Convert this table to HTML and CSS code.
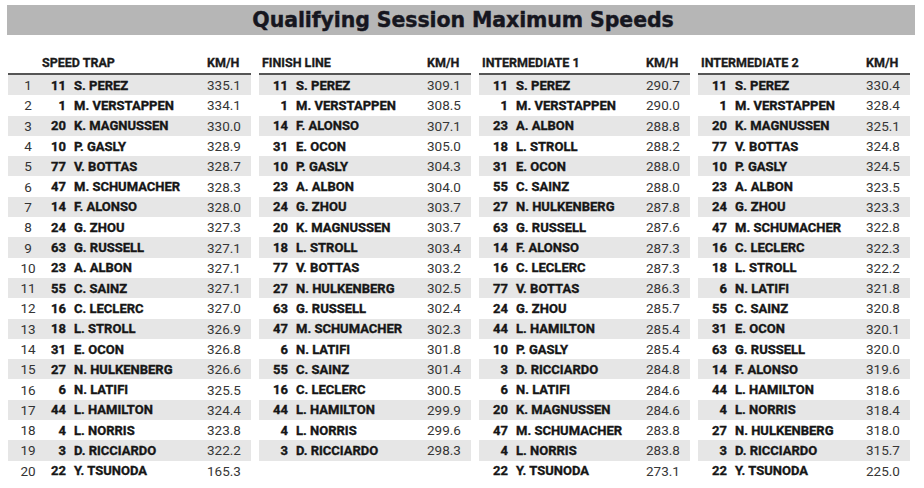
FILE: index.html
```html
<!DOCTYPE html>
<html>
<head>
<meta charset="utf-8">
<link rel="stylesheet" href="styles.css">
</head>
<body>
<div class="title-bar"><h1 class="title">Qualifying Session Maximum Speeds</h1></div>
<div class="tables">
  <div class="col col-first">
    <div class="head"><span class="h-pos"></span><span class="h-label">SPEED TRAP</span><span class="h-unit">KM/H</span></div>
    <div class="row"><span class="pos">1</span><span class="num">11</span><span class="name">S. PEREZ</span><span class="spd">335.1</span></div>
    <div class="row"><span class="pos">2</span><span class="num">1</span><span class="name">M. VERSTAPPEN</span><span class="spd">334.1</span></div>
    <div class="row"><span class="pos">3</span><span class="num">20</span><span class="name">K. MAGNUSSEN</span><span class="spd">330.0</span></div>
    <div class="row"><span class="pos">4</span><span class="num">10</span><span class="name">P. GASLY</span><span class="spd">328.9</span></div>
    <div class="row"><span class="pos">5</span><span class="num">77</span><span class="name">V. BOTTAS</span><span class="spd">328.7</span></div>
    <div class="row"><span class="pos">6</span><span class="num">47</span><span class="name">M. SCHUMACHER</span><span class="spd">328.3</span></div>
    <div class="row"><span class="pos">7</span><span class="num">14</span><span class="name">F. ALONSO</span><span class="spd">328.0</span></div>
    <div class="row"><span class="pos">8</span><span class="num">24</span><span class="name">G. ZHOU</span><span class="spd">327.3</span></div>
    <div class="row"><span class="pos">9</span><span class="num">63</span><span class="name">G. RUSSELL</span><span class="spd">327.1</span></div>
    <div class="row"><span class="pos">10</span><span class="num">23</span><span class="name">A. ALBON</span><span class="spd">327.1</span></div>
    <div class="row"><span class="pos">11</span><span class="num">55</span><span class="name">C. SAINZ</span><span class="spd">327.1</span></div>
    <div class="row"><span class="pos">12</span><span class="num">16</span><span class="name">C. LECLERC</span><span class="spd">327.0</span></div>
    <div class="row"><span class="pos">13</span><span class="num">18</span><span class="name">L. STROLL</span><span class="spd">326.9</span></div>
    <div class="row"><span class="pos">14</span><span class="num">31</span><span class="name">E. OCON</span><span class="spd">326.8</span></div>
    <div class="row"><span class="pos">15</span><span class="num">27</span><span class="name">N. HULKENBERG</span><span class="spd">326.6</span></div>
    <div class="row"><span class="pos">16</span><span class="num">6</span><span class="name">N. LATIFI</span><span class="spd">325.5</span></div>
    <div class="row"><span class="pos">17</span><span class="num">44</span><span class="name">L. HAMILTON</span><span class="spd">324.4</span></div>
    <div class="row"><span class="pos">18</span><span class="num">4</span><span class="name">L. NORRIS</span><span class="spd">323.8</span></div>
    <div class="row"><span class="pos">19</span><span class="num">3</span><span class="name">D. RICCIARDO</span><span class="spd">322.2</span></div>
    <div class="row"><span class="pos">20</span><span class="num">22</span><span class="name">Y. TSUNODA</span><span class="spd">165.3</span></div>
  </div>
  <div class="col col-finish">
    <div class="head"><span class="h-label">FINISH LINE</span><span class="h-unit">KM/H</span></div>
    <div class="row"><span class="num">11</span><span class="name">S. PEREZ</span><span class="spd">309.1</span></div>
    <div class="row"><span class="num">1</span><span class="name">M. VERSTAPPEN</span><span class="spd">308.5</span></div>
    <div class="row"><span class="num">14</span><span class="name">F. ALONSO</span><span class="spd">307.1</span></div>
    <div class="row"><span class="num">31</span><span class="name">E. OCON</span><span class="spd">305.0</span></div>
    <div class="row"><span class="num">10</span><span class="name">P. GASLY</span><span class="spd">304.3</span></div>
    <div class="row"><span class="num">23</span><span class="name">A. ALBON</span><span class="spd">304.0</span></div>
    <div class="row"><span class="num">24</span><span class="name">G. ZHOU</span><span class="spd">303.7</span></div>
    <div class="row"><span class="num">20</span><span class="name">K. MAGNUSSEN</span><span class="spd">303.7</span></div>
    <div class="row"><span class="num">18</span><span class="name">L. STROLL</span><span class="spd">303.4</span></div>
    <div class="row"><span class="num">77</span><span class="name">V. BOTTAS</span><span class="spd">303.2</span></div>
    <div class="row"><span class="num">27</span><span class="name">N. HULKENBERG</span><span class="spd">302.5</span></div>
    <div class="row"><span class="num">63</span><span class="name">G. RUSSELL</span><span class="spd">302.4</span></div>
    <div class="row"><span class="num">47</span><span class="name">M. SCHUMACHER</span><span class="spd">302.3</span></div>
    <div class="row"><span class="num">6</span><span class="name">N. LATIFI</span><span class="spd">301.8</span></div>
    <div class="row"><span class="num">55</span><span class="name">C. SAINZ</span><span class="spd">301.4</span></div>
    <div class="row"><span class="num">16</span><span class="name">C. LECLERC</span><span class="spd">300.5</span></div>
    <div class="row"><span class="num">44</span><span class="name">L. HAMILTON</span><span class="spd">299.9</span></div>
    <div class="row"><span class="num">4</span><span class="name">L. NORRIS</span><span class="spd">299.6</span></div>
    <div class="row"><span class="num">3</span><span class="name">D. RICCIARDO</span><span class="spd">298.3</span></div>
  </div>
  <div class="col col-int1">
    <div class="head"><span class="h-label">INTERMEDIATE 1</span><span class="h-unit">KM/H</span></div>
    <div class="row"><span class="num">11</span><span class="name">S. PEREZ</span><span class="spd">290.7</span></div>
    <div class="row"><span class="num">1</span><span class="name">M. VERSTAPPEN</span><span class="spd">290.0</span></div>
    <div class="row"><span class="num">23</span><span class="name">A. ALBON</span><span class="spd">288.8</span></div>
    <div class="row"><span class="num">18</span><span class="name">L. STROLL</span><span class="spd">288.2</span></div>
    <div class="row"><span class="num">31</span><span class="name">E. OCON</span><span class="spd">288.0</span></div>
    <div class="row"><span class="num">55</span><span class="name">C. SAINZ</span><span class="spd">288.0</span></div>
    <div class="row"><span class="num">27</span><span class="name">N. HULKENBERG</span><span class="spd">287.8</span></div>
    <div class="row"><span class="num">63</span><span class="name">G. RUSSELL</span><span class="spd">287.6</span></div>
    <div class="row"><span class="num">14</span><span class="name">F. ALONSO</span><span class="spd">287.3</span></div>
    <div class="row"><span class="num">16</span><span class="name">C. LECLERC</span><span class="spd">287.3</span></div>
    <div class="row"><span class="num">77</span><span class="name">V. BOTTAS</span><span class="spd">286.3</span></div>
    <div class="row"><span class="num">24</span><span class="name">G. ZHOU</span><span class="spd">285.7</span></div>
    <div class="row"><span class="num">44</span><span class="name">L. HAMILTON</span><span class="spd">285.4</span></div>
    <div class="row"><span class="num">10</span><span class="name">P. GASLY</span><span class="spd">285.4</span></div>
    <div class="row"><span class="num">3</span><span class="name">D. RICCIARDO</span><span class="spd">284.8</span></div>
    <div class="row"><span class="num">6</span><span class="name">N. LATIFI</span><span class="spd">284.6</span></div>
    <div class="row"><span class="num">20</span><span class="name">K. MAGNUSSEN</span><span class="spd">284.6</span></div>
    <div class="row"><span class="num">47</span><span class="name">M. SCHUMACHER</span><span class="spd">283.8</span></div>
    <div class="row"><span class="num">4</span><span class="name">L. NORRIS</span><span class="spd">283.8</span></div>
    <div class="row"><span class="num">22</span><span class="name">Y. TSUNODA</span><span class="spd">273.1</span></div>
  </div>
  <div class="col col-int2">
    <div class="head"><span class="h-label">INTERMEDIATE 2</span><span class="h-unit">KM/H</span></div>
    <div class="row"><span class="num">11</span><span class="name">S. PEREZ</span><span class="spd">330.4</span></div>
    <div class="row"><span class="num">1</span><span class="name">M. VERSTAPPEN</span><span class="spd">328.4</span></div>
    <div class="row"><span class="num">20</span><span class="name">K. MAGNUSSEN</span><span class="spd">325.1</span></div>
    <div class="row"><span class="num">77</span><span class="name">V. BOTTAS</span><span class="spd">324.8</span></div>
    <div class="row"><span class="num">10</span><span class="name">P. GASLY</span><span class="spd">324.5</span></div>
    <div class="row"><span class="num">23</span><span class="name">A. ALBON</span><span class="spd">323.5</span></div>
    <div class="row"><span class="num">24</span><span class="name">G. ZHOU</span><span class="spd">323.3</span></div>
    <div class="row"><span class="num">47</span><span class="name">M. SCHUMACHER</span><span class="spd">322.8</span></div>
    <div class="row"><span class="num">16</span><span class="name">C. LECLERC</span><span class="spd">322.3</span></div>
    <div class="row"><span class="num">18</span><span class="name">L. STROLL</span><span class="spd">322.2</span></div>
    <div class="row"><span class="num">6</span><span class="name">N. LATIFI</span><span class="spd">321.8</span></div>
    <div class="row"><span class="num">55</span><span class="name">C. SAINZ</span><span class="spd">320.8</span></div>
    <div class="row"><span class="num">31</span><span class="name">E. OCON</span><span class="spd">320.1</span></div>
    <div class="row"><span class="num">63</span><span class="name">G. RUSSELL</span><span class="spd">320.0</span></div>
    <div class="row"><span class="num">14</span><span class="name">F. ALONSO</span><span class="spd">319.6</span></div>
    <div class="row"><span class="num">44</span><span class="name">L. HAMILTON</span><span class="spd">318.6</span></div>
    <div class="row"><span class="num">4</span><span class="name">L. NORRIS</span><span class="spd">318.4</span></div>
    <div class="row"><span class="num">27</span><span class="name">N. HULKENBERG</span><span class="spd">318.0</span></div>
    <div class="row"><span class="num">3</span><span class="name">D. RICCIARDO</span><span class="spd">315.7</span></div>
    <div class="row"><span class="num">22</span><span class="name">Y. TSUNODA</span><span class="spd">225.0</span></div>
  </div>
</div>
</body>
</html>
```

FILE: styles.css
```css
html, body {
  margin: 0;
  padding: 0;
  background: #ffffff;
}
body {
  width: 924px;
  height: 488px;
  overflow: hidden;
  font-family: Roboto, "Liberation Sans", sans-serif;
  color: #1b1b1b;
}
.title-bar {
  margin: 5px 9px 0 7px;
  height: 30px;
  background: #b6b6b6;
  display: flex;
  align-items: center;
  justify-content: center;
}
.title {
  margin: 0 0 0 4px;
  font-family: "DejaVu Sans", sans-serif;
  font-weight: bold;
  font-size: 20.5px;
  line-height: 30px;
  color: #16161f;
  letter-spacing: -0.1px;
  -webkit-text-stroke: 0.4px #16161f;
}
.tables {
  display: flex;
  gap: 8px;
  margin: 17px 0 0 8px;
  align-items: flex-start;
}
.col { display: flex; flex-direction: column; }
.col-first { width: 243px; }
.col-finish { width: 212px; }
.col-int1 { width: 211px; }
.col-int2 { width: 212px; }

.head, .row {
  display: grid;
  grid-template-columns: 29px 1fr 44px;
  align-items: center;
}
.col-first .head, .col-first .row {
  grid-template-columns: 30px 28px 1fr 44px;
}
.head {
  height: 21px;
  border-bottom: 2px solid #555555;
  font-weight: bold;
  font-size: 12.5px;
  color: #1b1b1b;
  white-space: nowrap;
  -webkit-text-stroke: 0.3px #1b1b1b;
}
.h-label { padding-left: 3px; grid-column: 1 / 3; }
.col-first .h-label { padding-left: 4px; grid-column: 2 / 4; }
.row {
  height: 20.3px;
  font-size: 13px;
}
.row:nth-child(even) { background: #e6e6e6; }
.pos {
  padding-left: 10px;
  text-align: center;
  color: #333333;
  font-size: 13.5px;
}
.num, .name {
  font-weight: bold;
  color: #161616;
  -webkit-text-stroke: 0.35px #161616;
}
.num { text-align: right; }
.name {
  padding-left: 8px;
  white-space: nowrap;
}
.spd { color: #363636; font-size: 13.5px; }
```
